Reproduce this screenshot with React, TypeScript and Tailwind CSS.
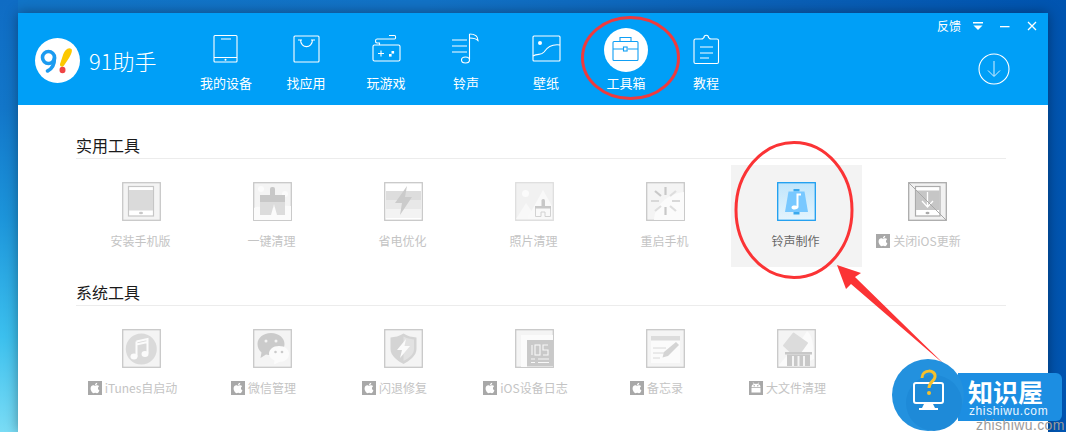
import React from "react";
import { FaApple } from "react-icons/fa";

const F = "font-['Noto_Sans_CJK_SC','Microsoft_YaHei',sans-serif]";

function Svg({ children, size = 39, box = "0 0 39 39" }: { children: React.ReactNode; size?: number; box?: string }) {
  return (
    <svg width={size} height={size} viewBox={box} className="block" fill="none">
      {children}
    </svg>
  );
}

const navItems: { label: string; icon: React.ReactNode; active?: boolean }[] = [
  {
    label: "我的设备",
    icon: (
      <Svg size={32} box="0 0 32 32">
        <g stroke="#fff" strokeWidth="1.1">
          <rect x="4" y="1.5" width="23" height="26.5" rx="1" />
          <path d="M4 23.5H27M11 5H21" />
        </g>
        <circle cx="15.5" cy="25.8" r="1" fill="#fff" />
      </Svg>
    ),
  },
  {
    label: "找应用",
    icon: (
      <Svg size={32} box="0 0 32 32">
        <g stroke="#fff" strokeWidth="1.1">
          <rect x="4" y="2" width="25" height="26" rx="1" />
          <path d="M10.5 5.5C10.5 15 22.5 15 22.5 5.5M8 6H12M21 6H25" />
        </g>
      </Svg>
    ),
  },
  {
    label: "玩游戏",
    icon: (
      <Svg size={32} box="0 0 32 32">
        <g stroke="#fff" strokeWidth="1.1">
          <rect x="3" y="11" width="27" height="16" rx="1.5" />
          <path d="M19 1.5H24.5C26 1.5 26 5 24.5 5H7C5 5 5 9 7 9H9.5V11M8 19.5H14M11 16.5V22.5" />
        </g>
        <rect x="21.5" y="17" width="2.6" height="2.6" fill="#fff" />
        <rect x="19" y="20" width="2.6" height="2.6" fill="#fff" />
      </Svg>
    ),
  },
  {
    label: "铃声",
    icon: (
      <Svg size={36} box="0 0 36 36">
        <g stroke="#fff" strokeWidth="1.1">
          <path d="M4 8H19M4 14H19M4 20H19M21.500 2V27" />
          <ellipse cx="17.500" cy="28" rx="4" ry="3" />
          <path d="M21.500 2C27 2 30 4 30 8.500C28 6.500 25 6 21.500 6" />
        </g>
      </Svg>
    ),
  },
  {
    label: "壁纸",
    icon: (
      <Svg size={32} box="0 0 32 32">
        <g stroke="#fff" strokeWidth="1.1">
          <rect x="3" y="2" width="27" height="25" rx="1" />
          <path d="M3 22C8 19 11 22 14 18C18 12 23 10 30 11" />
        </g>
        <circle cx="10" cy="9" r="2" fill="#fff" />
      </Svg>
    ),
  },
  {
    label: "工具箱",
    active: true,
    icon: (
      <div className="flex h-[44px] w-[44px] items-center justify-center rounded-full bg-white">
        <Svg size={30} box="0 0 30 30">
          <g stroke="#0f9ff5" strokeWidth="1.1">
            <rect x="2" y="6.500" width="25" height="19" rx="1" />
            <path d="M9 6.500V2.500H20V6.500M2 14H12M17 14H27" />
            <rect x="12.500" y="12" width="3.600" height="4" />
          </g>
        </Svg>
      </div>
    ),
  },
  {
    label: "教程",
    icon: (
      <Svg size={32} box="0 0 32 32">
        <g stroke="#fff" strokeWidth="1.1">
          <path d="M11 5H5.500C4.500 5 4 5.500 4 6.500V28C4 29 4.500 29.500 5.500 29.500H27C28 29.500 28.500 29 28.500 28V6.500C28.500 5.500 28 5 27 5H21.500C19 5 20 4.500 18.500 3.500C18.500 0.500 14 0.500 14 3.500C12.500 4.500 13.500 5 11 5Z" />
          <path d="M10 13H23M10 19H23M10 24H19" />
        </g>
      </Svg>
    ),
  },
];

function AppleBadge() {
  return (
    <span className="flex h-[14px] w-[14px] shrink-0 items-center justify-center bg-[#a8a8a8] text-white">
      <FaApple size={12} />
    </span>
  );
}

function AndroidBadge() {
  return (
    <span className="flex h-[14px] w-[14px] shrink-0 items-center justify-center bg-[#a8a8a8]">
      <svg width="12" height="12" viewBox="0 0 12 12" fill="#fff">
        <path d="M1.500 5.200C1.500 2.800 3.500 1.800 6 1.800S10.500 2.800 10.500 5.200Z" />
        <rect x="1.500" y="6" width="9" height="4.500" />
        <path d="M3.200 0.500L4.200 2M8.800 0.500L7.800 2" stroke="#fff" strokeWidth="0.8" />
        <circle cx="4.200" cy="3.800" r="0.700" fill="#a8a8a8" />
        <circle cx="7.800" cy="3.800" r="0.700" fill="#a8a8a8" />
      </svg>
    </span>
  );
}

function Frame({ children, border = "#c8c8c8", bg = "#f4f4f4" }: { children: React.ReactNode; border?: string; bg?: string }) {
  return (
    <Svg>
      <rect x="0.700" y="0.700" width="37.600" height="37.600" fill={bg} stroke={border} strokeWidth="1.300" />
      {children}
    </Svg>
  );
}

const icons: Record<string, React.ReactNode> = {
  tablet: (
    <Frame>
      <rect x="6.500" y="4.500" width="25" height="29.500" fill="#fff" stroke="#c6c6c6" strokeWidth="1.200" />
      <rect x="7" y="8" width="24" height="20.500" fill="#dadada" />
      <ellipse cx="19" cy="31" rx="2" ry="1.300" fill="#c8c8c8" />
    </Frame>
  ),
  broom: (
    <Frame>
      <circle cx="8" cy="7" r="3" fill="#fbfbfb" />
      <circle cx="32" cy="12" r="3" fill="#fbfbfb" />
      <path d="M1 26C8 22 12 30 20 26S32 24 38 24V38H1Z" fill="#fbfbfb" />
      <rect x="17" y="5" width="5" height="10" rx="2" fill="#c8c8c8" />
      <rect x="7" y="13" width="25" height="7" fill="#c8c8c8" />
      <path d="M7 20H32V33H24L21 22L18 33H7Z" fill="#dcdcdc" />
    </Frame>
  ),
  bolt: (
    <Frame bg="#ffffff">
      <rect x="2" y="9" width="35" height="9" fill="#dddddd" />
      <rect x="2" y="18" width="35" height="9" fill="#e8e8e8" />
      <rect x="2" y="27" width="35" height="9" fill="#f3f3f3" />
      <path d="M23 4L11 21H18L16 33L28 15H21Z" fill="#cbcbcb" />
    </Frame>
  ),
  photo: (
    <Frame border="#dedede" bg="#f1f1f1">
      <circle cx="10.500" cy="11.500" r="3.500" fill="#fbfbfb" />
      <path d="M1 37L11 21L22 37Z" fill="#f8f8f8" />
      <path d="M12 37L28 8L37 24V37Z" fill="#f9f9f9" />
      <path d="M20.500 25H35.500V34.500H30V30H26V34.500H20.500Z" fill="none" stroke="#d2d2d2" />
      <rect x="26.500" y="17" width="3.500" height="8" rx="1.500" fill="#c8c8c8" />
      <rect x="20" y="24" width="16" height="2.500" fill="#c8c8c8" />
    </Frame>
  ),
  restart: (
    <Frame>
      <path d="M8 38C8 25 20 12 38 10V38Z" fill="#fbfbfb" />
      <g stroke="#c8c8c8" strokeWidth="2.200">
        <path d="M19.500 5V13M19.500 25V33" />
        <path d="M5 19H13M26 19H34" stroke="#d8d8d8" />
        <path d="M9 9L15 14" />
        <path d="M30 9L24 14M9 29L15 24M30 29L24 24" stroke="#dedede" />
      </g>
    </Frame>
  ),
  bell: (
    <Svg>
      <defs>
        <linearGradient id="bellbg" x1="0" y1="0" x2="0" y2="1">
          <stop offset="0" stopColor="#bfe5fb" />
          <stop offset="1" stopColor="#e4f4fd" />
        </linearGradient>
      </defs>
      <rect x="0.700" y="0.700" width="37.600" height="37.600" fill="url(#bellbg)" stroke="#1b9df0" strokeWidth="1.300" />
      <rect x="16.500" y="7" width="6" height="2.500" fill="#3aa9ee" />
      <rect x="16.500" y="30" width="6" height="2.500" fill="#3aa9ee" />
      <path d="M11.500 9.500H27.500L31 30H8Z" fill="#78c8ff" />
      <path d="M19.500 11.500H24V13.500H21.500V25C21.500 28 14.500 28.500 14.500 25.500C14.500 23.500 17.500 23 19.500 24Z" fill="#fff" />
    </Svg>
  ),
  update: (
    <Svg>
      <rect x="0.700" y="0.700" width="37.600" height="37.600" fill="#f2f2f2" stroke="#ababab" strokeWidth="1.300" />
      <rect x="7.500" y="4.500" width="24.500" height="29.500" fill="#fff" stroke="#ababab" strokeWidth="1.200" />
      <rect x="8" y="8.500" width="23.500" height="19.500" fill="#c6c6c6" />
      <path d="M19.500 10V24M14 19L19.500 25L25 19" stroke="#fff" strokeWidth="1.300" />
      <ellipse cx="19.500" cy="31" rx="2" ry="1.200" fill="#aaa" />
      <path d="M1 1L38 38" stroke="#a8a8a8" />
    </Svg>
  ),
  itunes: (
    <Frame>
      <circle cx="19.300" cy="20" r="15.500" fill="#dadada" />
      <path d="M14.500 12.500L25.500 10V24.500M14.500 12.500V27.500M14.500 15.500L25.500 13" stroke="#fbfbfb" strokeWidth="2" />
      <ellipse cx="12" cy="27.500" rx="3.500" ry="3" fill="#fbfbfb" />
      <ellipse cx="23" cy="25" rx="3.500" ry="3" fill="#fbfbfb" />
    </Frame>
  ),
  wechat: (
    <Frame>
      <path d="M18 4C26 4 31.500 9 31.500 15S26 26 18 26C16 26 15 26 13 25.500L7.500 29L8.500 23.500C6 21.500 4.500 18.500 4.500 15C4.500 9 10 4 18 4Z" fill="#cbcbcb" />
      <circle cx="13" cy="12" r="1.500" fill="#f4f4f4" />
      <circle cx="23" cy="12" r="1.500" fill="#f4f4f4" />
      <path d="M26 17C32 17 36 20.500 36 25S32 33 26 33L21 35.500L21.500 31.500C18.500 30 16 28 16 25C16 20.500 20 17 26 17Z" fill="#fbfbfb" />
      <circle cx="22.500" cy="23" r="1.300" fill="#cbcbcb" />
      <circle cx="29" cy="23" r="1.300" fill="#cbcbcb" />
    </Frame>
  ),
  shield: (
    <Frame>
      <path d="M19.500 4.500C24 7.500 28 8 32.500 8.500V20C32.500 27 25 32 19.500 35C14 32 6.500 27 6.500 20V8.500C11 8 15 7.500 19.500 4.500Z" fill="#d4d4d4" />
      <path d="M19.500 7.500V32C24 29.500 30 26 30 20V10.500C26 10 23 9.500 19.500 7.500Z" fill="#e2e2e2" />
      <path d="M22 10L13 21H18L16 29L26 17H20.500Z" fill="#fbfbfb" />
    </Frame>
  ),
  ioslog: (
    <Frame bg="#f4f4f4">
      <rect x="6" y="6" width="32" height="32" fill="#fbfbfb" />
      <rect x="12" y="11" width="26" height="26.500" fill="#c9c9c9" />
      <g fill="none" stroke="#f8f8f8" strokeWidth="1.100">
        <path d="M17 16V26" />
        <rect x="20" y="16" width="5" height="10" />
        <path d="M33 16H28V21H33V26H28" />
        <path d="M16 30H20M23 30H34M16 33.500H20M23 33.500H34" />
      </g>
    </Frame>
  ),
  notes: (
    <Frame>
      <rect x="5" y="7" width="29" height="27" fill="#fbfbfb" />
      <rect x="5" y="7" width="29" height="4.500" fill="#dcdcdc" />
      <path d="M7 19H20M7 24H18M7 29H14" stroke="#d8d8d8" />
      <path d="M30 13L33 16L22 27L16.500 28.500L18 23Z" fill="#d4d4d4" />
    </Frame>
  ),
  file: (
    <Frame>
      <path d="M30 2C36 6 37 20 37 30L22 37H2C3 32 15 25 30 2Z" fill="#fbfbfb" />
      <path d="M16.500 4.500L30 14L23.500 23H14L7 16.500Z" fill="#dcdcdc" stroke="#dcdcdc" strokeWidth="2" strokeLinejoin="round" />
      <rect x="8" y="23" width="27" height="2.500" fill="#c8c8c8" />
      <path d="M10 25.500H33V37H10Z" fill="#c8c8c8" />
      <path d="M16 27V37M21.500 27V37M27 27V37" stroke="#f4f4f4" strokeWidth="2" />
    </Frame>
  ),
};

type Tool = { label: string; icon: string; badge?: "apple" | "android"; active?: boolean };

const row1: Tool[] = [
  { label: "安装手机版", icon: "tablet" },
  { label: "一键清理", icon: "broom" },
  { label: "省电优化", icon: "bolt" },
  { label: "照片清理", icon: "photo" },
  { label: "重启手机", icon: "restart" },
  { label: "铃声制作", icon: "bell", active: true },
  { label: "关闭iOS更新", icon: "update", badge: "apple" },
];

const row2: Tool[] = [
  { label: "iTunes自启动", icon: "itunes", badge: "apple" },
  { label: "微信管理", icon: "wechat", badge: "apple" },
  { label: "闪退修复", icon: "shield", badge: "apple" },
  { label: "iOS设备日志", icon: "ioslog", badge: "apple" },
  { label: "备忘录", icon: "notes", badge: "apple" },
  { label: "大文件清理", icon: "file", badge: "android" },
];

function ToolCell({ tool }: { tool: Tool }) {
  return (
    <div className={`flex h-[102px] flex-col items-center pt-[17px] ${tool.active ? "bg-[#f3f3f3]" : ""}`}>
      {icons[tool.icon]}
      <div
        className={`mt-[11px] flex h-[18px] items-center gap-[3px] text-[12px] leading-[18px] whitespace-nowrap ${tool.badge ? "pr-[18px]" : "pr-[2px]"} ${
          tool.active ? "text-[#666666]" : "text-[#c4c4c4]"
        }`}
      >
        {tool.badge === "apple" && <AppleBadge />}
        {tool.badge === "android" && <AndroidBadge />}
        <span>{tool.label}</span>
      </div>
    </div>
  );
}

function Section({ title, tools }: { title: string; tools: Tool[] }) {
  return (
    <section>
      <h2 className="h-[26px] border-b border-[#ececec] text-[16px] leading-[25px] font-normal text-[#1a1a1a]">{title}</h2>
      <div className="mt-[6px] grid grid-cols-[repeat(7,131px)]">
        {tools.map((t) => (
          <ToolCell key={t.label} tool={t} />
        ))}
      </div>
    </section>
  );
}

export default function App() {
  return (
    <div
      className={`${F} relative h-[432px] w-[1066px] overflow-hidden bg-[linear-gradient(to_top,#7adcf5_0%,#3cc0ee_22%,#1c94da_50%,#1276c9_75%,#0f6cc4_100%),linear-gradient(to_right,#1174c7_0%,#1272c6_40%,#0a5fb6_75%,#0054b0_100%)] bg-size-[18px_100%,100%_100%] bg-no-repeat pt-[13px] pl-[18px]`}
    >
      <div className="h-[419px] w-[1030px] bg-white shadow-[0_0_12px_rgba(0,0,0,0.38)]">
        <header className="relative flex h-[92px] bg-[#009ff7] text-white">
          <div className="flex w-[168px] items-center pt-[2px] pl-[17px]">
            <div className="h-[45px] w-[45px] rounded-full bg-white">
              <svg width="45" height="45" viewBox="0 0 45 45" fill="none">
                <circle cx="13.500" cy="19.500" r="6" stroke="#1b9bf0" strokeWidth="3.600" />
                <path d="M19.500 20C19.500 26 17 31 12.500 33" stroke="#1b9bf0" strokeWidth="3.600" strokeLinecap="round" />
                <path d="M36.500 11C37.500 12.500 36.500 16 34 20L29 27.500C27.500 30 24.500 28.500 25 26L28 17C29.500 12 33.500 8.500 36.500 11Z" fill="#fcc800" />
                <ellipse cx="27.500" cy="32" rx="3" ry="3.200" fill="#ef4444" />
              </svg>
            </div>
            <span className="ml-[9px] text-[22px] leading-none font-light whitespace-nowrap">91助手</span>
          </div>
          <nav className="flex">
            {navItems.map((n) => (
              <div key={n.label} className="flex w-[80px] flex-col items-center">
                <div className="flex h-[60px] items-center justify-center pt-[14px]">{n.icon}</div>
                <span className="text-[13px] leading-[20px]">{n.label}</span>
              </div>
            ))}
          </nav>
          <div className="ml-auto flex flex-col items-end pr-[10px]">
            <div className="flex h-[25px] items-center">
              <span className="text-[12px]">反馈</span>
              <svg width="12" height="10" viewBox="0 0 12 10" className="ml-[11px]" fill="#fff">
                <rect x="1" y="1" width="10" height="1.500" />
                <path d="M1.500 4.500H10.500L6 9Z" />
              </svg>
              <svg width="12" height="10" viewBox="0 0 12 10" className="ml-[15px]" fill="#fff">
                <rect x="1" y="5" width="9.500" height="1.300" />
              </svg>
              <svg width="12" height="12" viewBox="0 0 12 12" className="ml-[15px]" stroke="#fff" strokeWidth="1.300">
                <path d="M2 2L10 10M10 2L2 10" />
              </svg>
            </div>
            <svg width="34" height="34" viewBox="0 0 34 34" fill="none" stroke="#fff" className="mt-[14px] mr-[27px]">
              <circle cx="17" cy="17" r="15" strokeWidth="1.100" />
              <path d="M17 9V24M11 18.500L17 24.500L23 18.500" stroke="#d5f0ff" />
            </svg>
          </div>
        </header>
        <main className="pt-[28px] pr-[42px] pl-[58px]">
          <Section title="实用工具" tools={row1} />
          <div className="mt-[13px]">
            <Section title="系统工具" tools={row2} />
          </div>
        </main>
      </div>

      {/* annotations drawn over the screenshot */}
      <svg width="1066" height="432" viewBox="0 0 1066 432" className="absolute top-0 left-0" fill="none">
        <ellipse cx="630.500" cy="58" rx="48" ry="40.500" stroke="#ef3a3d" strokeWidth="3" />
        <ellipse cx="794" cy="210" rx="58" ry="67.500" stroke="#fb3335" strokeWidth="3" />
        <path d="M837 265L861 273L855 277L945 365L851 284L846 289Z" fill="#fb3335" />
      </svg>

      <div className="absolute top-[373px] left-[958px] h-[48px] w-[104px] rounded-r-[6px] bg-[#1c8ee2]" />
      <div className="absolute top-[359px] left-[892px] h-[72px] w-[72px] rounded-full bg-[#2391de]">
        <svg width="72" height="72" viewBox="0 0 72 72" fill="none">
          <circle cx="42" cy="44" r="28" fill="#1e8ad8" />
          <rect x="22" y="24" width="29" height="20" rx="2" stroke="#fff" strokeWidth="2" />
          <path d="M32 45H41L43 49H30Z" fill="#fff" />
          <rect x="27" y="49" width="19" height="2" fill="#fff" />
          <path d="M30 19C30 10 44 10 43 18C42.500 22 37 23 37 29" stroke="#f6c02c" strokeWidth="3" />
          <circle cx="37" cy="34" r="2" fill="#f6c02c" />
        </svg>
      </div>
      <div className="absolute top-[379px] left-[968px] text-[25px] leading-[25px] font-bold whitespace-nowrap text-white">知识屋</div>
      <div className="absolute top-[405px] left-[969px] font-['Liberation_Sans',sans-serif] text-[12px] leading-[12px] tracking-[0.6px] whitespace-nowrap text-[#e8f5ff]">zhishiwu.com</div>
      <div className="absolute top-[418px] left-[976px] font-['Liberation_Sans',sans-serif] text-[14px] leading-[14px] tracking-[0.4px] whitespace-nowrap text-[#9a9a9a]">zhishiwu.com</div>
    </div>
  );
}
